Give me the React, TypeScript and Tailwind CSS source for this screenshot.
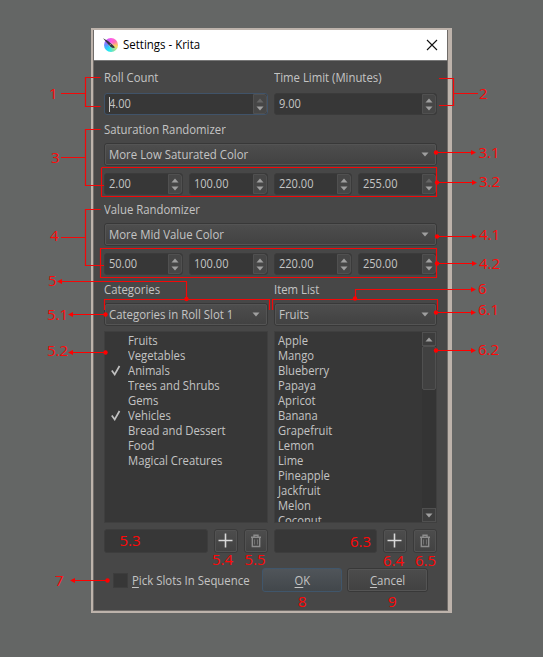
import React from "react";

const categories = ["Fruits", "Vegetables", "Animals", "Trees and Shrubs", "Gems", "Vehicles", "Bread and Dessert", "Food", "Magical Creatures"];
const checked = ["Animals", "Vehicles"];
const items = ["Apple", "Mango", "Blueberry", "Papaya", "Apricot", "Banana", "Grapefruit", "Lemon", "Lime", "Pineapple", "Jackfruit", "Melon", "Coconut"];

function Text({ children, scale = "scale-x-[0.945]" }: { children: React.ReactNode; scale?: string }) {
  return <span className={`inline-block origin-left whitespace-nowrap ${scale}`}>{children}</span>;
}

function Arrow({ up = false, dim = false }: { up?: boolean; dim?: boolean }) {
  return (
    <svg width="8" height="5" viewBox="0 0 8 5" className={dim ? "fill-[#666]" : "fill-[#a0a0a0]"}>
      {up ? <path d="M0.5 4.5 4 0.5 7.5 4.5Z" /> : <path d="M0.5 0.5 4 4.5 7.5 0.5Z" />}
    </svg>
  );
}

function Spin({ value, focus = false, dimUp = false }: { value: string; focus?: boolean; dimUp?: boolean }) {
  return (
    <div className={`flex h-[22px] min-w-0 flex-1 overflow-hidden rounded-[3px] border bg-[#373737] ${focus ? "border-[#405369]" : "border-[#3b3b3b]"}`}>
      <div className="flex flex-1 items-center pl-1">
        {focus && <span className="-mr-px h-[15px] w-px bg-[#c8c8c8]" />}
        <Text scale="scale-x-[0.92]">{value}</Text>
      </div>
      <div className="flex w-[14px] flex-col items-center justify-center gap-[3px] rounded-r-[3px] border border-[#505050] bg-[#464646]">
        <Arrow up dim={focus || dimUp} />
        <Arrow />
      </div>
    </div>
  );
}

function Combo({ value }: { value: string }) {
  return (
    <div className="h-[23px] rounded-[3px] border border-[#383838]">
      <div className="flex h-full items-center justify-between rounded-[2px] border border-[#545454] bg-linear-to-b from-[#4d4d4d] to-[#424242] pr-[6px] pl-[3px]">
        <Text scale="scale-x-[0.95]">{value}</Text>
        <Arrow />
      </div>
    </div>
  );
}

function IconButton({ kind }: { kind: "add" | "delete" }) {
  return (
    <div className="h-6 w-6 rounded-[3px] border border-[#3a3a3a]">
      <div className="flex h-full items-center justify-center rounded-[2px] border border-[#525252] bg-linear-to-b from-[#4c4c4c] to-[#424242]">
        {kind === "add" ? (
          <svg width="16" height="16" viewBox="0 0 16 16" className="stroke-[#d8d8d8]" strokeWidth="1.6">
            <path d="M7.5 0.5V14.5M0.5 7.5H14.5" />
          </svg>
        ) : (
          <svg width="12" height="14" viewBox="0 0 12 14" fill="none" className="stroke-[#8c8c8c]" strokeWidth="1.4">
            <path d="M1 3.2H11M4 3V1.2H8V3M2.3 3.5V12.5H9.7V3.5" />
            <path d="M4.5 5.5V10.5M7.5 5.5V10.5" strokeWidth="0.6" />
          </svg>
        )}
      </div>
    </div>
  );
}

function EntryRow() {
  return (
    <div className="mt-[6px] flex h-6 gap-[6px]">
      <div className="flex-1 rounded-[3px] border border-[#3d3d3d] bg-[#373737]" />
      <IconButton kind="add" />
      <IconButton kind="delete" />
    </div>
  );
}

function Label({ children }: { children: React.ReactNode }) {
  return <div className="h-4 flex-1 leading-4"><Text>{children}</Text></div>;
}

function KritaLogo() {
  return (
    <div className="relative h-[14px] w-[15px]">
      <div className="ml-px h-[14px] w-[14px] rounded-full bg-[conic-gradient(#ff5be8,#ff70b4,#ffd95a,#7de4b0,#20e8f4,#4ca9ff,#b05cff,#ff5be8)]" />
      <svg className="absolute top-0 left-0" width="15" height="14" viewBox="0 0 15 14">
        <circle cx="8" cy="7" r="2.4" fill="#fff" fillOpacity=".25" />
        <path d="M0 .2 5 3 9.5 6.8Q12 8.6 11.6 10Q9.2 10.1 7.5 8.7L3.6 4.6Z" fill="#363541" />
        <path d="m6.4 7.5 1.8-1.9" stroke="#aaa" strokeWidth=".8" />
      </svg>
    </div>
  );
}

function Dot({ x, y }: { x: number; y: number }) {
  return <circle cx={x} cy={y} r="2.2" fill="#f00" stroke="none" />;
}

function Head({ x, y, left = false }: { x: number; y: number; left?: boolean }) {
  return <path d={left ? `M${x} ${y}l5-2.6v5.2z` : `M${x} ${y}l-5-2.6v5.2z`} fill="#f00" stroke="none" />;
}

const notes: [number, number, string][] = [
  [49, 99, "1"], [479, 99, "2"], [51, 163, "3"], [478.5, 158, "3.1"], [479, 187, "3.2"],
  [50, 241, "4"], [479, 240, "4.1"], [479, 269, "4.2"], [48, 286, "5"], [47, 320, "5.1"], [47, 356, "5.2"],
  [478, 294, "6"], [478, 315, "6.1"], [478, 355, "6.2"], [119.5, 545.5, "5.3"], [350, 546.5, "6.3"],
  [212, 565, "5.4"], [244.5, 565, "5.5"], [383, 566, "6.4"], [415, 566, "6.5"],
  [55, 586, "7"], [298, 607, "8"], [388, 607, "9"],
];

function Annotations() {
  return (
    <svg className="absolute inset-0" width="543" height="657" fill="none" stroke="#f40808" strokeWidth="1.2">
      <path d="M100.5 77.5H85.5V106.5H100.5M61 93.5H85M439 78.5H453.5V105.5H439M454 93.5H478" />
      <path d="M100.5 129.5H85.5V185.5H104M61 157.5H85M100.5 209.5H85.5V265.5H104M61 237.5H85" />
      <path d="M102 167.5H436.5V196.5H101.5V167.5M101.5 248.5H436.5V277.5H100.5V248.5Z" />
      <path d="M104.5 310V299.5H269.5V310M272.5 310V299.5H437.5V310M186.5 298V281.5H60M355.5 298V289.5H473" />
      <path stroke="#f00" d="M437 152.5H473M437 182.5H474M437 236.5H474M437 263.5H474M437 312.5H473M437 350.5H473M105 314.5H71M105 352.5H71M107 580.5H73" />
      {[[436, 152.5], [437, 182.5], [437, 236.5], [437, 263.5], [186.5, 299], [355, 298.5], [436, 312.5], [436, 350.5], [105.5, 314.5], [105.5, 352.5], [107.5, 580.5]].map(([x, y]) => <Dot key={`${x}-${y}`} x={x} y={y} />)}
      {[[476, 152.5], [477, 182.5], [477, 236.5], [477, 263.5], [476, 289.5], [476, 312.5], [476, 350.5]].map(([x, y]) => <Head key={y} x={x} y={y} />)}
      {[[57, 281.5], [68, 314.5], [68, 352.5], [70, 580.5]].map(([x, y]) => <Head key={y} x={x} y={y} left />)}
      {notes.map(([x, y, t]) => <text key={t} x={x} y={y} fill="#ff0808" stroke="none" className="font-['Open_Sans',sans-serif] text-[15px]">{t}</text>)}
    </svg>
  );
}

export default function App() {
  return (
    <div className="relative h-[657px] w-[543px] overflow-hidden bg-[#646665] pt-7 pl-[91px] font-['Open_Sans','Noto_Sans',sans-serif] text-[12px] text-[#c4c4c4]">
      <div className="h-[585px] w-[361px] border-t-2 border-r-4 border-b-2 border-l-2 border-[#bdb3ab]">
        <div className="flex h-full flex-col border-r border-b border-l border-[#706c69] bg-[#474747]">
          <div className="flex h-[31px] items-center border-b border-[#777] bg-white pr-[9px] pl-[9px] text-black">
            <KritaLogo />
            <span className="ml-[5px] flex-1"><Text scale="scale-x-[0.955]">Settings - Krita</Text></span>
            <svg width="12" height="12" viewBox="0 0 12 12" stroke="#111" strokeWidth="1.1"><path d="m1 1 10 10M11 1 1 11" /></svg>
          </div>
          <div className="flex flex-col pt-[9px] pr-[10px] pl-[10px]">
            <div className="flex gap-[6px]"><Label>Roll Count</Label><Label>Time Limit (Minutes)</Label></div>
            <div className="mt-[7px] flex gap-[6px]"><Spin value="4.00" focus /><Spin value="9.00" /></div>
            <div className="mt-[7px] flex"><Label>Saturation Randomizer</Label></div>
            <div className="mt-[5px]"><Combo value="More Low Saturated Color" /></div>
            <div className="mt-[7px] flex gap-[6px]"><Spin value="2.00" /><Spin value="100.00" /><Spin value="220.00" /><Spin value="255.00" dimUp /></div>
            <div className="mt-[7px] flex"><Label>Value Randomizer</Label></div>
            <div className="mt-[5px]"><Combo value="More Mid Value Color" /></div>
            <div className="mt-[7px] flex gap-[6px]"><Spin value="50.00" /><Spin value="100.00" /><Spin value="220.00" /><Spin value="250.00" /></div>
            <div className="mt-[7px] grid grid-cols-2 gap-x-[6px]">
              <div>
                <Label>Categories</Label>
                <div className="mt-[5px]"><Combo value="Categories in Roll Slot 1" /></div>
                <div className="mt-[5px] h-[192px] border border-[#3f3f3f] bg-[#373737] pt-px">
                  {categories.map((name) => (
                    <div key={name} className="flex h-[15px] items-center leading-[15px]">
                      <span className="flex w-[23px] pl-[6px]">
                        {checked.includes(name) && <svg width="10" height="11" viewBox="0 0 10 11" fill="none" stroke="#c0c0c0" strokeWidth="1.7"><path d="M.8 5.5 3.7 9.5 8.5 1" /></svg>}
                      </span>
                      <Text scale="scale-x-[0.94]">{name}</Text>
                    </div>
                  ))}
                </div>
                <EntryRow />
              </div>
              <div>
                <Label>Item List</Label>
                <div className="mt-[5px]"><Combo value="Fruits" /></div>
                <div className="mt-[5px] flex h-[192px] overflow-hidden border border-[#3f3f3f] bg-[#373737]">
                  <div className="flex-1 overflow-hidden pt-px pl-[3px]">
                    {items.map((name) => <div key={name} className="h-[15px] leading-[15px]"><Text scale="scale-x-[0.935]">{name}</Text></div>)}
                  </div>
                  <div className="flex w-[14px] flex-col bg-[#343434]">
                    <div className="flex h-[14px] items-center justify-center border border-[#505050] bg-[#3d3d3d]"><Arrow up /></div>
                    <div className="h-[44px] rounded-[2px] border border-[#505050] bg-[#414141]" />
                    <div className="flex-1" />
                    <div className="flex h-[14px] items-center justify-center border border-[#505050] bg-[#3d3d3d]"><Arrow /></div>
                  </div>
                </div>
                <EntryRow />
              </div>
            </div>
            <div className="mt-[15px] flex h-6 items-center">
              <div className="ml-[9px] h-[15px] w-[15px] border border-[#3d3d3d] bg-[#373737]" />
              <div className="ml-1 w-[130px] pt-[2px]"><Text scale="scale-x-[0.95]"><u className="underline-offset-2">P</u>ick Slots In Sequence</Text></div>
              <div className="flex h-6 w-20 items-center justify-center rounded-[3px] border border-[#40566b] bg-linear-to-b from-[#50555a] to-[#42474b] pt-[2px]"><span className="scale-x-[0.93]"><u className="underline-offset-2">O</u>K</span></div>
              <div className="ml-[5px] h-6 w-[81px] rounded-[3px] border border-[#383838]">
                <div className="flex h-full items-center justify-center rounded-[2px] border border-[#545454] bg-linear-to-b from-[#4c4c4c] to-[#424242] pt-[2px]"><span className="scale-x-[0.95]"><u className="underline-offset-2">C</u>ancel</span></div>
              </div>
            </div>
          </div>
        </div>
      </div>
      <Annotations />
    </div>
  );
}
